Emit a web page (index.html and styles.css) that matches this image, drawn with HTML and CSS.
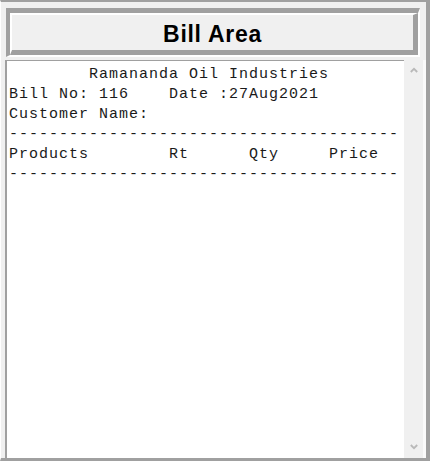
FILE: index.html
```html
<!DOCTYPE html>
<html>
<head>
<meta charset="utf-8">
<link rel="stylesheet" href="styles.css">
</head>
<body>
<div class="frame">
  <div class="title-outer">
    <div class="title-inner">Bill Area</div>
  </div>
  <div class="text-row">
    <div class="bill-text">        Ramananda Oil Industries
Bill No: 116    Date :27Aug2021
Customer Name:
---------------------------------------
Products        Rt      Qty     Price
---------------------------------------</div>
    <div class="scroll">
      <svg class="arrow" width="8" height="6" viewBox="0 0 8 6"><path d="M0.8 5 L4 1.8 L7.2 5" fill="none" stroke="#b9b9b9" stroke-width="1.8"/></svg>
      <svg class="arrow" width="8" height="6" viewBox="0 0 8 6"><path d="M0.8 1 L4 4.2 L7.2 1" fill="none" stroke="#b9b9b9" stroke-width="1.8"/></svg>
    </div>
  </div>
</div>
</body>
</html>
```

FILE: styles.css
```css
html, body {
  margin: 0;
  padding: 0;
  background: #f0f0f0;
}
body {
  width: 430px;
  height: 461px;
  overflow: hidden;
}
.frame {
  box-sizing: border-box;
  width: 430px;
  height: 461px;
  border-top: 2px solid #a0a0a0;
  border-right: 4px solid #a0a0a0;
  border-bottom: 3px solid #a0a0a0;
  border-left: 1px solid #ffffff;
  display: flex;
  flex-direction: column;
}
.title-outer {
  box-sizing: border-box;
  margin: 6px 6px 0 5px;
  height: 49px;
  border-top: 5px solid #a0a0a0;
  border-left: 4px solid #a0a0a0;
  border-bottom: 2px solid #ffffff;
  border-right: 2px solid #ffffff;
}
.title-inner {
  box-sizing: border-box;
  height: 100%;
  border-top: 2px solid #ffffff;
  border-left: 2px solid #ffffff;
  border-bottom: 5px solid #a0a0a0;
  border-right: 5px solid #a0a0a0;
  background: #f0f0f0;
  text-align: center;
  font-family: "Liberation Sans", Arial, sans-serif;
  font-weight: bold;
  font-size: 23px;
  letter-spacing: 0.7px;
  line-height: 31px;
  padding-top: 4px;
  color: #000;
}
.text-row {
  flex: 1;
  display: flex;
  margin: 3px 0 0 4px;
  min-height: 0;
}
.bill-text {
  flex: 1;
  background: #ffffff;
  border-top: 1px solid #a0a0a0;
  border-left: 2px solid #a0a0a0;
  padding: 4px 0 0 2px;
  font-family: "Liberation Mono", "Courier New", monospace;
  font-size: 15px;
  letter-spacing: 1px;
  line-height: 20px;
  white-space: pre;
  color: #1a1a1a;
  overflow: hidden;
}
.scroll {
  width: 19px;
  border-right: 3px solid #fafafa;
  background: #f0f0f0;
  display: flex;
  flex-direction: column;
  justify-content: space-between;
  align-items: center;
  padding: 7px 0 8px;
}
.arrow {
  display: block;
}
```
